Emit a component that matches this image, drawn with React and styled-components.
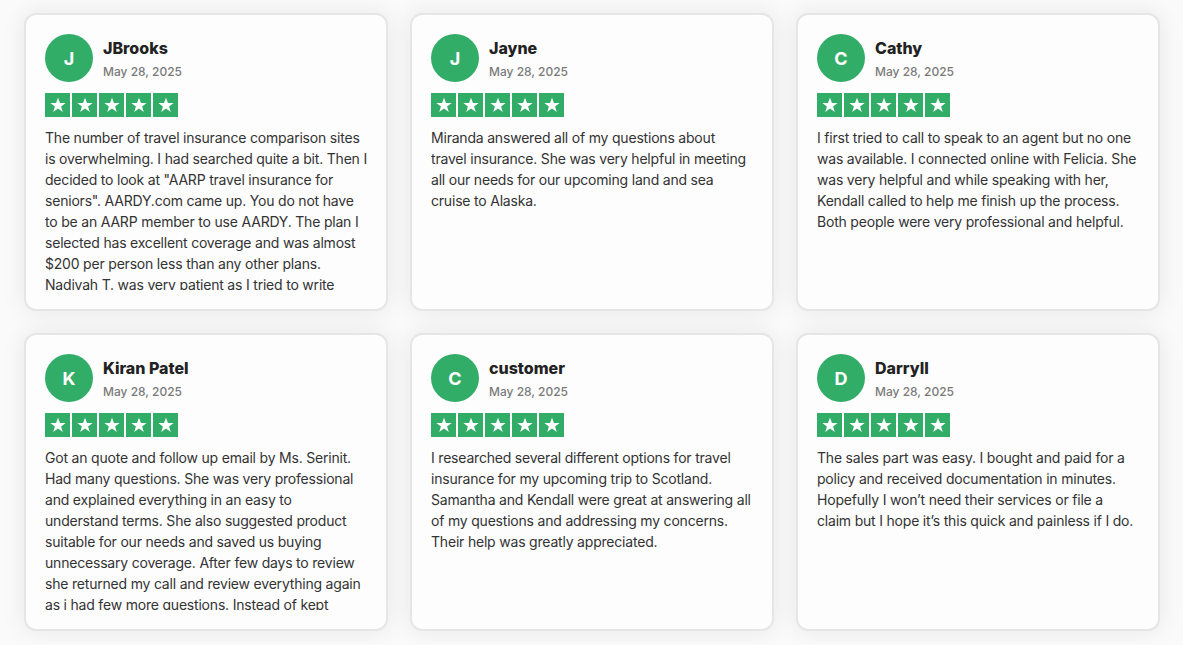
import React from "react";
import styled, { createGlobalStyle } from "styled-components";

const Global = createGlobalStyle`
  html, body { margin: 0; padding: 0; background: #fafafa; }
  body { font-family: Inter, "Noto Sans", "Liberation Sans", sans-serif; -webkit-font-smoothing: antialiased; }
  * { box-sizing: border-box; }
`;

const Grid = styled.div`
  display: grid;
  grid-template-columns: repeat(3, 1fr);
  gap: 22px;
  padding: 13px 23px 13px 24px;
`;

const Card = styled.article`
  height: 298px;
  background: #fdfdfd;
  border: 2px solid #e6e6e6;
  border-radius: 12px;
  box-shadow: 0 0 24px rgba(0, 0, 0, 0.08);
  padding: 19px;
  display: flex;
  flex-direction: column;
`;

const Header = styled.div`
  display: flex;
  align-items: flex-start;
  gap: 10px;
`;

const Avatar = styled.div`
  width: 48px;
  height: 48px;
  border-radius: 50%;
  background: #31ad68;
  color: #fff;
  font-weight: 700;
  font-size: 18px;
  display: flex;
  align-items: center;
  justify-content: center;
  flex-shrink: 0;
`;

const Meta = styled.div`
  display: flex;
  flex-direction: column;
  padding-top: 4px;
`;

const Name = styled.div`
  font-size: 16px;
  line-height: 20px;
  font-weight: 800;
  color: #222;
`;

const DateText = styled.div`
  margin-top: 6px;
  font-size: 12px;
  line-height: 16px;
  font-weight: 500;
  color: #7a7a7a;
`;

const Stars = styled.div`
  display: flex;
  gap: 2px;
  margin-top: 11px;
`;

const StarBox = styled.div`
  width: 25px;
  height: 24px;
  background: #31ad68;
  display: flex;
  align-items: center;
  justify-content: center;
`;

const Body = styled.p`
  margin: 10px 0 0;
  flex: 1;
  overflow: hidden;
  font-size: 14px;
  line-height: 21px;
  letter-spacing: -0.2px;
  color: #333;
`;

const Star = () => (
  <StarBox>
    <svg width="18" height="18" viewBox="0 0 24 24">
      <path
        d="M12 2.2l2.6 7.2h7.6l-6.1 4.5 2.3 7.4L12 16.8l-6.4 4.5 2.3-7.4-6.1-4.5h7.6z"
        fill="#fff"
      />
    </svg>
  </StarBox>
);

const reviews = [
  {
    name: "JBrooks",
    text:
      'The number of travel insurance comparison sites is overwhelming. I had searched quite a bit. Then I decided to look at "AARP travel insurance for seniors". AARDY.com came up. You do not have to be an AARP member to use AARDY. The plan I selected has excellent coverage and was almost $200 per person less than any other plans. Nadivah T. was very patient as I tried to write down all the details and answered every question I had.',
  },
  {
    name: "Jayne",
    text:
      "Miranda answered all of my questions about travel insurance. She was very helpful in meeting all our needs for our upcoming land and sea cruise to Alaska.",
  },
  {
    name: "Cathy",
    text:
      "I first tried to call to speak to an agent but no one was available. I connected online with Felicia. She was very helpful and while speaking with her, Kendall called to help me finish up the process. Both people were very professional and helpful.",
  },
  {
    name: "Kiran Patel",
    text:
      "Got an quote and follow up email by Ms. Serinit. Had many questions. She was very professional and explained everything in an easy to understand terms. She also suggested product suitable for our needs and saved us buying unnecessary coverage. After few days to review she returned my call and review everything again as i had few more questions. Instead of kept pushing me she was patient and helpful.",
  },
  {
    name: "customer",
    text:
      "I researched several different options for travel insurance for my upcoming trip to Scotland. Samantha and Kendall were great at answering all of my questions and addressing my concerns. Their help was greatly appreciated.",
  },
  {
    name: "Darryll",
    text:
      "The sales part was easy. I bought and paid for a policy and received documentation in minutes. Hopefully I won\u2019t need their services or file a claim but I hope it\u2019s this quick and painless if I do.",
  },
];

export default function App() {
  return (
    <>
      <Global />
      <Grid>
        {reviews.map((r) => (
          <Card key={r.name}>
            <Header>
              <Avatar>{r.name[0].toUpperCase()}</Avatar>
              <Meta>
                <Name>{r.name}</Name>
                <DateText>May 28, 2025</DateText>
              </Meta>
            </Header>
            <Stars>
              {[0, 1, 2, 3, 4].map((i) => (
                <Star key={i} />
              ))}
            </Stars>
            <Body>{r.text}</Body>
          </Card>
        ))}
      </Grid>
    </>
  );
}
